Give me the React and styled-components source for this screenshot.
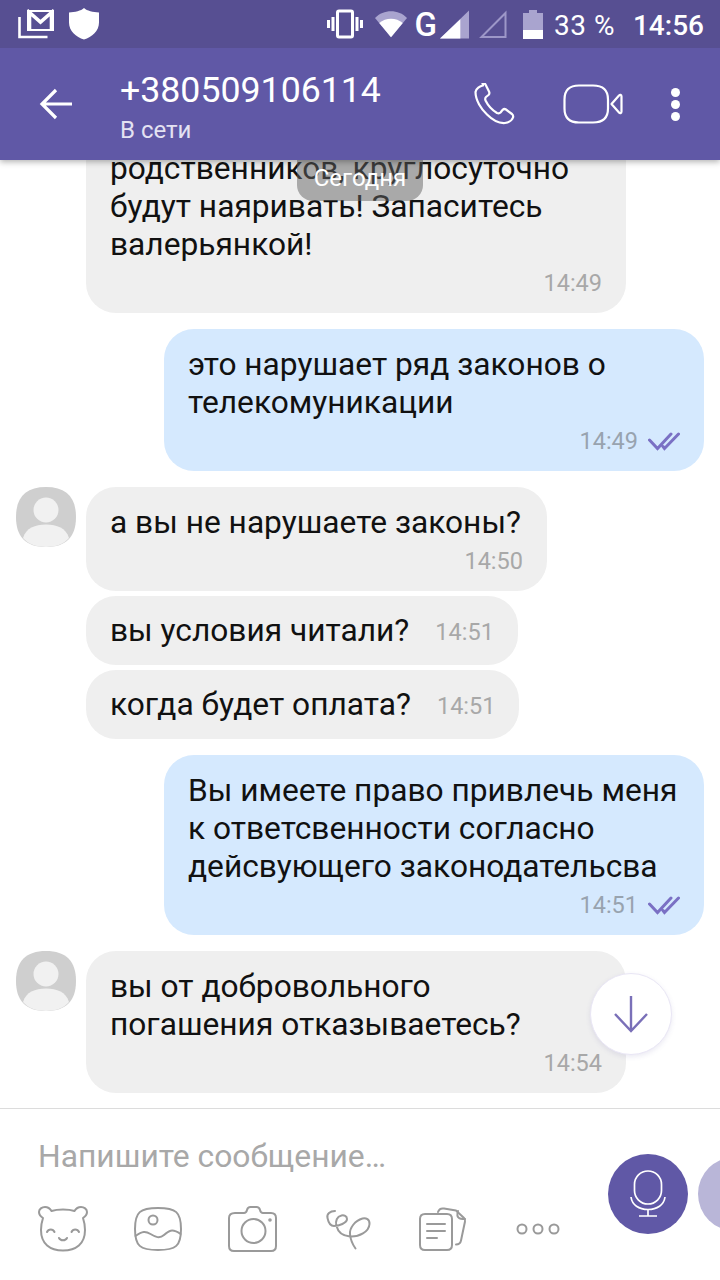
import React from "react";
import styled, { createGlobalStyle } from "styled-components";

const GlobalStyle = createGlobalStyle`
  html, body {
    margin: 0;
    padding: 0;
    background: #fff;
    font-family: Roboto, "Noto Sans", sans-serif;
  }
`;

const MESSAGES = [
  { id: 1, side: "in", lines: "родственников, круглосуточно будут наяривать! Запаситесь валерьянкой!", time: "14:49", gap: 0 },
  { id: 2, side: "out", lines: "это нарушает ряд законов о телекомуникации", time: "14:49", gap: 16 },
  { id: 3, side: "in", avatar: true, lines: "а вы не нарушаете законы?", time: "14:50", gap: 16 },
  { id: 4, side: "in", inline: true, lines: "вы условия читали?", time: "14:51", gap: 5 },
  { id: 5, side: "in", inline: true, lines: "когда будет оплата?", time: "14:51", gap: 5 },
  { id: 6, side: "out", lines: "Вы имеете право привлечь меня к ответсвенности согласно дейсвующего законодательсва", time: "14:51", gap: 16 },
  { id: 7, side: "in", avatar: true, lines: "вы от добровольного погашения отказываетесь?", time: "14:54", gap: 16 },
];

const App = () => {
  return (
    <>
      <GlobalStyle />
      <Screen>
        <TopArea>
          <StatusBar>
            <LeftIcons>
              <MailIcon />
              <ShieldIcon />
            </LeftIcons>
            <StatusGroup>
              <VibrateIcon />
              <WifiIcon />
              <NetworkLetter>G</NetworkLetter>
              <SignalIcon />
              <EmptySignalIcon />
              <BatteryIcon />
              <BatteryText>33 %</BatteryText>
              <ClockText>14:56</ClockText>
            </StatusGroup>
          </StatusBar>
          <Header>
            <BackIcon />
            <ContactInfo>
              <ContactName>+380509106114</ContactName>
              <ContactStatus>В сети</ContactStatus>
            </ContactInfo>
            <HeaderActions>
              <PhoneIcon />
              <VideoIcon />
              <MenuDots>
                <i />
                <i />
                <i />
              </MenuDots>
            </HeaderActions>
          </Header>
        </TopArea>

        <MessageList>
          <DatePill>Сегодня</DatePill>
          {MESSAGES.map((m) => (
            <Row key={m.id} $side={m.side} $gap={m.gap}>
              {m.avatar && <Avatar />}
              <Bubble $side={m.side} $inline={m.inline}>
                <BubbleText>{m.lines}</BubbleText>
                <Meta $inline={m.inline}>
                  <Time $side={m.side}>{m.time}</Time>
                  {m.side === "out" && <SeenIcon />}
                </Meta>
              </Bubble>
            </Row>
          ))}
          <ScrollDown>
            <svg width="36" height="38" viewBox="0 0 36 38" fill="none" stroke="#7a70b8" strokeWidth="2.4">
              <path d="M18 1v35M2 19l16 17 16-17" />
            </svg>
          </ScrollDown>
        </MessageList>

        <Composer>
          <ComposerMain>
            <Placeholder>Напишите сообщение…</Placeholder>
            <ToolRow>
              <BearIcon />
              <PictureIcon />
              <CameraIcon />
              <DoodleIcon />
              <DocsIcon />
              <MoreIcon />
            </ToolRow>
          </ComposerMain>
          <MicButton>
            <svg width="36" height="48" viewBox="0 0 36 48" fill="none" stroke="#fff" strokeWidth="1.7">
              <rect x="4.5" y="1" width="27" height="33" rx="13.5" />
              <path d="M1 27c1 8 8 12.5 17 12.5S34 35 35 27M18 39.5V46M9 46h18" />
            </svg>
          </MicButton>
          <SecondButton />
        </Composer>
      </Screen>
    </>
  );
};

const MailIcon = () => (
  <svg width="36" height="30" viewBox="0 0 36 30" fill="none" stroke="#fff">
    <path d="M1.5 8v20h28" strokeWidth="2.6" />
    <path d="M10 2h25v19H10z" strokeWidth="2" />
    <path d="M11.5 21V3.500L22.500 13 33.500 3.500V21" strokeWidth="3.6" />
  </svg>
);

const ShieldIcon = () => (
  <svg width="30" height="32" viewBox="0 0 30 32" fill="#fff">
    <path d="M15 0c3 3 9 4 15 4.500v10C30 23 23 29 15 31.500 7 29 0 23 0 14.500v-10C6 4 12 3 15 0z" />
  </svg>
);

const VibrateIcon = () => (
  <VibrateSvg width="36" height="30" viewBox="0 0 36 30" fill="none" stroke="#fff" strokeWidth="3">
    <rect x="10.5" y="2" width="15" height="26" rx="1.500" />
    <path d="M6 8v14M30 8v14M1.500 11v8M34.500 11v8" />
  </VibrateSvg>
);

const WifiIcon = () => (
  <svg width="32" height="28" viewBox="0 0 34 28">
    <path d="M0 7.500C9-2 25-2 34 7.500L17 28z" fill="#a9a4cf" />
    <path d="M4.500 13c7-6 18-6 25 0L17 28z" fill="#fff" />
  </svg>
);

const SignalIcon = () => (
  <svg width="29" height="29" viewBox="0 0 30 29">
    <path d="M30 0v29H0z" fill="#a9a4cf" />
    <path d="M21 9v20H0z" fill="#fff" />
  </svg>
);

const EmptySignalIcon = () => (
  <svg width="28" height="28" viewBox="0 0 28 28" fill="none" stroke="#9d97c8" strokeWidth="2">
    <path d="M26.500 3v24H2.500z" />
  </svg>
);

const BatteryIcon = () => (
  <BatterySvg width="20" height="29" viewBox="0 0 20 29">
    <path d="M6 0h8v3h6v26H0V3h6z" fill="#a9a4cf" />
    <path d="M0 20h20v9H0z" fill="#fff" />
  </BatterySvg>
);

const BackIcon = () => (
  <BackWrap>
    <svg width="34" height="32" viewBox="0 0 34 32" fill="none" stroke="#fff" strokeWidth="3.2">
      <path d="M33 16H3M17 2L3 16l14 14" />
    </svg>
  </BackWrap>
);

const PhoneIcon = () => (
  <svg width="42" height="42" viewBox="0 0 42 42" fill="none" stroke="#fff" strokeWidth="2.2" strokeLinejoin="round">
    <path d="M10 2.500c-3 .5-7 3-7.500 6.500C2.500 17 8 26 14 31.500c5 5 12 9 18 8.500 3-.5 7-2.500 8-5.500.5-1.500 0-2.500-1-3.500l-6-4.500c-1.500-1-2.500-.5-3.500.5l-2 2.500c-1 1-2 1-3.500.5-5-3-9-7.500-11.500-12.500-.5-1.500-.5-2.500.5-3.500l2.500-2c1-1 1-2.500.5-3.500l-3.500-7c-.5-1-1.500-1.500-3-1z" />
  </svg>
);

const VideoIcon = () => (
  <svg width="60" height="40" viewBox="0 0 60 40" fill="none" stroke="#fff" strokeWidth="2.2" strokeLinejoin="round">
    <path d="M16 1.500h14c10 0 15 5 15 14v9c0 9-5 14-15 14H16C6 38.500 1.500 33.500 1.500 24.500v-9C1.500 6.500 6 1.500 16 1.500z" />
    <path d="M48.500 20L56 11.500c1-1.200 2.500-.8 2.500 1v15c0 1.800-1.500 2.200-2.500 1z" />
  </svg>
);

const SeenIcon = () => (
  <svg width="32" height="20" viewBox="0 0 32 20" fill="none" stroke="#7a70c4" strokeWidth="3" strokeLinecap="round">
    <path d="M1.500 9l8 8.500L23 3M15 15.500l1.500 2L30.500 3" />
  </svg>
);

const Avatar = () => (
  <AvatarWrap>
    <svg width="60" height="60" viewBox="0 0 60 60">
      <path d="M30 0c20 0 30 10 30 30S50 60 30 60 0 50 0 30 10 0 30 0z" fill="#cfcfcf" />
      <circle cx="30" cy="23" r="12.500" fill="#f1f1f1" />
      <path d="M7 51c3-10 12-13.500 23-13.500S50 41 53 51c-5 6-13 9-23 9S12 57 7 51z" fill="#f1f1f1" />
    </svg>
  </AvatarWrap>
);

const toolProps = {
  fill: "none",
  stroke: "#9a9a9a",
  strokeWidth: 2,
  strokeLinecap: "round",
  strokeLinejoin: "round",
};

const BearIcon = () => (
  <ToolSvg viewBox="0 0 50 46" {...toolProps}>
    <path d="M5 12C2 10 1 8 1 6c0-3 3-5 6-5s5 1.500 6.500 4c3-1 7-1.500 11.500-1.500S33.500 4 36.500 5C38 2.500 40 1 43 1s6 2 6 5c0 2-1 4-4 6 1 3 2 7 2 12C47 38 38 44.500 25 44.500S3 38 3 24c0-5 1-9 2-12z" />
    <path d="M9 26c1.500-3.500 6-3.500 7.500 0M33.500 26c1.500-3.500 6-3.500 7.500 0M21 32c1.500 3 6.500 3 8 0" />
  </ToolSvg>
);

const PictureIcon = () => (
  <ToolSvg viewBox="0 0 50 46" {...toolProps}>
    <path d="M25 2c18 0 23 4 23 21s-5 21-23 21S2 40 2 23 7 2 25 2z" />
    <circle cx="20" cy="14" r="4.500" />
    <path d="M2.500 30c7-5 10-5 15-2s9 5 13.500 1 8-7 16.500-1" />
  </ToolSvg>
);

const CameraIcon = () => (
  <ToolSvg viewBox="0 0 50 46" {...toolProps}>
    <path d="M7 7h9c2 0 2.500-1 3-3 .5-2 1.500-3 3.500-3h6c2 0 3 1 3.500 3s1 3 3 3h8c3 0 5 2 5 5v28c0 3-2 5-5 5H6c-3 0-5-2-5-5V12c0-3 2-5 6-5z" />
    <circle cx="25.500" cy="25" r="12" />
    <circle cx="42" cy="14" r=".8" />
  </ToolSvg>
);

const DoodleIcon = () => (
  <ToolSvg viewBox="0 0 50 46" {...toolProps}>
    <path d="M12 5C7 5 3.500 8 4.500 12 5.500 17 8 20 11 20c5 0 13-3 13-7 0-3-3-4-5.500-3.500C14 10.500 12 15 13.500 20c1.500 6 6.500 10 13.500 10.500 9 .5 19-4.500 19.500-12.500.3-4.500-3.500-6.500-7-5.500C32 14.500 26.500 22 27 28c.5 6 3 11 5.500 14.500" />
  </ToolSvg>
);

const DocsIcon = () => (
  <ToolSvg viewBox="0 0 50 46" {...toolProps}>
    <path d="M20 6c1-3 3-4 6-3.500l12 2 8 7.500c1 1 1.500 2 1 3.500l-4 19c-.5 2.500-2 4-5 4" />
    <path d="M40 5c-1 3-.5 6 1 7 1 1 3 1 6 1" />
    <path d="M7 8h22c3 0 5 2 5 5v26c0 3-2 5-5 5H7c-3 0-5-2-5-5V13c0-3 2-5 5-5z" />
    <path d="M9 18h18M9 25h18M9 32h10" />
  </ToolSvg>
);

const MoreIcon = () => (
  <ToolSvg viewBox="0 0 50 46" {...toolProps}>
    <circle cx="9" cy="23" r="4.500" />
    <circle cx="25" cy="23" r="4.500" />
    <circle cx="41" cy="23" r="4.500" />
  </ToolSvg>
);

const Screen = styled.div`
  position: relative;
  display: flex;
  flex-direction: column;
  width: 720px;
  height: 1280px;
  overflow: hidden;
  background: #fff;
`;

const TopArea = styled.div`
  position: relative;
  z-index: 2;
  flex: none;
  box-shadow: 0 2px 6px rgba(0, 0, 0, 0.3);
`;

const StatusBar = styled.div`
  display: flex;
  align-items: center;
  justify-content: space-between;
  height: 48px;
  padding: 0 16px 0 18px;
  background: #574f92;
`;

const StatusGroup = styled.div`
  display: flex;
  align-items: center;
  gap: 10px;
`;

const LeftIcons = styled(StatusGroup)`
  gap: 15px;
`;

const VibrateSvg = styled.svg`
  margin-right: 2px;
`;

const BatterySvg = styled.svg`
  margin-left: 6px;
`;

const NetworkLetter = styled.span`
  margin-left: -2px;
  margin-right: -7px;
  color: #fff;
  font-size: 33px;
  font-weight: 500;
  line-height: 1;
`;

const BatteryText = styled.span`
  margin-left: 1px;
  padding-top: 2px;
  color: #fff;
  font-size: 28px;
  letter-spacing: 0.5px;
`;

const ClockText = styled.span`
  margin-left: 8px;
  padding-top: 2px;
  color: #fff;
  font-size: 28px;
  font-weight: 500;
`;

const Header = styled.div`
  display: flex;
  align-items: center;
  height: 112px;
  background: #6058a6;
`;

const BackWrap = styled.div`
  display: flex;
  width: 80px;
  padding-left: 39px;
  margin-right: 1px;
`;

const ContactInfo = styled.div`
  display: flex;
  flex: 1;
  flex-direction: column;
  gap: 6px;
  padding-top: 4px;
`;

const ContactName = styled.div`
  color: #fff;
  font-size: 35.7px;
  line-height: 42px;
`;

const ContactStatus = styled.div`
  color: #e4e2f2;
  font-size: 24px;
  line-height: 26px;
`;

const HeaderActions = styled.div`
  display: flex;
  align-items: center;
  gap: 48px;
  padding-right: 40px;
`;

const MenuDots = styled.div`
  display: flex;
  flex-direction: column;
  gap: 3px;

  i {
    display: block;
    width: 9px;
    height: 9px;
    border-radius: 50%;
    background: #fff;
  }
`;

const MessageList = styled.div`
  position: relative;
  flex: 1;
  min-height: 0;
  display: flex;
  flex-direction: column;
  justify-content: flex-end;
  padding: 0 16px 15px;
  overflow: hidden;
`;

const DatePill = styled.div`
  position: absolute;
  top: 0;
  left: 297px;
  z-index: 1;
  width: 126px;
  height: 41px;
  border-radius: 0 0 16px 16px;
  background: rgba(100, 100, 100, 0.5);
  color: #fff;
  font-size: 24px;
  line-height: 37px;
  text-align: center;
`;

const Row = styled.div`
  flex: none;
  display: flex;
  align-items: flex-start;
  justify-content: ${(p) => (p.$side === "out" ? "flex-end" : "flex-start")};
  margin-top: ${(p) => p.$gap}px;
  padding-left: ${(p) => (p.$side === "in" ? "70px" : "0")};
`;

const AvatarWrap = styled.div`
  display: flex;
  flex: none;
  margin-left: -70px;
  margin-right: 10px;
`;

const Bubble = styled.div`
  display: flex;
  flex-direction: ${(p) => (p.$inline ? "row" : "column")};
  align-items: ${(p) => (p.$inline ? "center" : "stretch")};
  justify-content: space-between;
  gap: ${(p) => (p.$inline ? "24px" : "0")};
  box-sizing: border-box;
  min-width: ${(p) => (p.$inline ? "431px" : "0")};
  max-width: 540px;
  padding: ${(p) => (p.$inline ? "16px 24px 15px" : "17px 24px 13px")};
  border-radius: 30px;
  background: ${(p) => (p.$side === "out" ? "#d5e9fe" : "#efefef")};
`;

const BubbleText = styled.div`
  padding-right: 2px;
  color: #111;
  font-size: 31.7px;
  line-height: 38px;
`;

const Meta = styled.div`
  display: flex;
  align-items: center;
  justify-content: flex-end;
  gap: 10px;
  margin-top: ${(p) => (p.$inline ? "0" : "2px")};
  padding-top: ${(p) => (p.$inline ? "2px" : "0")};
  height: ${(p) => (p.$inline ? "auto" : "34px")};
`;

const Time = styled.span`
  color: ${(p) => (p.$side === "out" ? "#98a3af" : "#a8a8a8")};
  font-size: 23.5px;
`;

const ScrollDown = styled.div`
  position: absolute;
  right: 48px;
  bottom: 53px;
  display: flex;
  align-items: center;
  justify-content: center;
  box-sizing: border-box;
  width: 82px;
  height: 82px;
  border: 1px solid #e9e6f5;
  border-radius: 50%;
  background: #fff;
  box-shadow: 0 2px 5px rgba(90, 80, 160, 0.12);
`;

const Composer = styled.div`
  flex: none;
  display: flex;
  align-items: flex-start;
  box-sizing: border-box;
  height: 172px;
  padding: 0 0 0 38px;
  border-top: 1px solid #dcdcdc;
  overflow: hidden;
`;

const ComposerMain = styled.div`
  display: flex;
  flex: none;
  flex-direction: column;
  width: 570px;
`;

const Placeholder = styled.div`
  margin-top: 28px;
  color: #a8a8a8;
  font-size: 31.8px;
  line-height: 38px;
`;

const ToolRow = styled.div`
  display: flex;
  gap: 45px;
  margin-top: 31px;
`;

const ToolSvg = styled.svg`
  flex: none;
  width: 50px;
  height: 46px;
`;

const MicButton = styled.div`
  display: flex;
  flex: none;
  align-items: center;
  justify-content: center;
  width: 80px;
  height: 80px;
  margin-top: 45px;
  border-radius: 50%;
  background: #6058a6;
`;

const SecondButton = styled.div`
  flex: none;
  width: 74px;
  height: 74px;
  margin-top: 48px;
  margin-left: 10px;
  border-radius: 50%;
  background: #b9b6d8;
`;

export default App;
